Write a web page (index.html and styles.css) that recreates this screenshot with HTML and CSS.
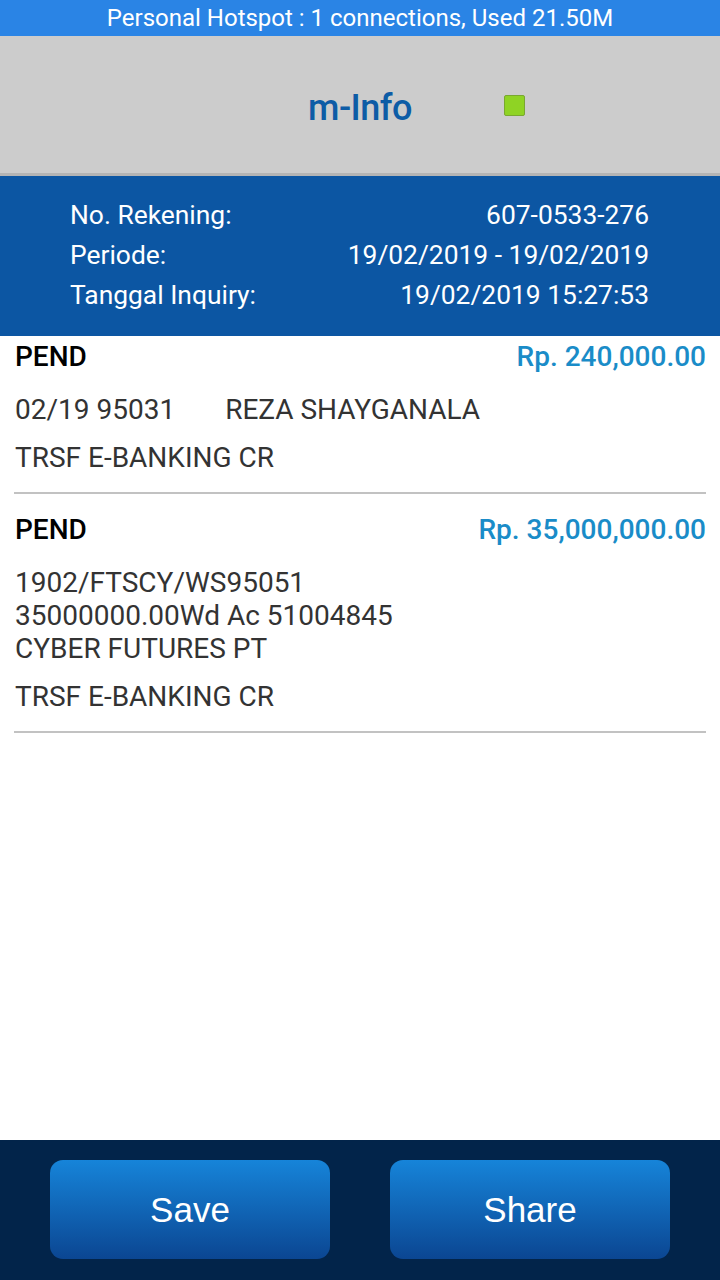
FILE: index.html
```html
<!DOCTYPE html>
<html lang="id">
<head>
<meta charset="utf-8">
<title>m-Info</title>
<link rel="stylesheet" href="styles.css">
</head>
<body>
<div class="screen">
  <div class="statusbar">Personal Hotspot : 1 connections, Used 21.50M</div>
  <header class="appbar">
    <h1 class="title">m-Info</h1>
    <span class="indicator"></span>
  </header>
  <section class="info">
    <div class="info-row"><span>No. Rekening:</span><span>607-0533-276</span></div>
    <div class="info-row"><span>Periode:</span><span>19/02/2019 - 19/02/2019</span></div>
    <div class="info-row"><span>Tanggal Inquiry:</span><span>19/02/2019 15:27:53</span></div>
  </section>
  <main class="list">
    <div class="entry">
      <div class="entry-head"><span class="status">PEND</span><span class="amount">Rp. 240,000.00</span></div>
      <div class="desc"><span class="code">02/19 95031</span><span>REZA SHAYGANALA</span></div>
      <div class="type">TRSF E-BANKING CR</div>
    </div>
    <div class="entry">
      <div class="entry-head"><span class="status">PEND</span><span class="amount">Rp. 35,000,000.00</span></div>
      <div class="desc">1902/FTSCY/WS95051<br>35000000.00Wd Ac 51004845<br>CYBER FUTURES PT</div>
      <div class="type">TRSF E-BANKING CR</div>
    </div>
  </main>
  <footer class="actions">
    <button class="btn">Save</button>
    <button class="btn">Share</button>
  </footer>
</div>
</body>
</html>
```
FILE: styles.css
```css
* { box-sizing: border-box; }
html, body { margin: 0; padding: 0; }
body {
  font-family: Roboto, "Noto Sans", sans-serif;
  background: #ffffff;
}
.screen {
  width: 720px;
  height: 1280px;
  display: flex;
  flex-direction: column;
  overflow: hidden;
}
.statusbar {
  height: 36px;
  background: #2a84e5;
  color: #ffffff;
  font-size: 24px;
  line-height: 36px;
  text-align: center;
  white-space: nowrap;
}
.appbar {
  height: 140px;
  background: #cccccc;
  border-bottom: 3px solid #b4b4b4;
  display: flex;
  align-items: center;
  justify-content: center;
  padding-top: 6px;
  position: relative;
}
.title {
  margin: 0;
  font-size: 36px;
  font-weight: 500;
  color: #0d5ca6;
  letter-spacing: -0.5px;
}
.indicator {
  position: absolute;
  left: 504px;
  top: 59px;
  width: 21px;
  height: 21px;
  background: #8fd324;
  border: 1px solid #79a830;
  border-radius: 2px;
}
.info {
  height: 160px;
  background: #0c56a3;
  color: #ffffff;
  padding: 19px 71px 21px 70px;
  font-size: 26.4px;
}
.info-row {
  display: flex;
  justify-content: space-between;
  line-height: 40px;
}
.list {
  flex: 1;
  padding: 0 14px;
}
.entry {
  border-bottom: 2px solid #c2c2c2;
  padding-bottom: 18px;
}
.entry + .entry { margin-top: 15px; }
.entry-head {
  display: flex;
  justify-content: space-between;
  align-items: center;
  height: 40px;
  padding-left: 1px;
}
.status {
  font-size: 28px;
  font-weight: 500;
  color: #000000;
}
.amount {
  font-size: 28px;
  font-weight: 500;
  color: #1a8cc8;
}
.desc {
  margin-top: 17px;
  font-size: 28px;
  line-height: 33px;
  color: #333333;
  padding-left: 1px;
}
.code { margin-right: 50px; }
.type {
  margin-top: 15px;
  font-size: 28px;
  line-height: 33px;
  color: #333333;
  padding-left: 1px;
}
.actions {
  height: 140px;
  background: #02244a;
  display: flex;
  justify-content: center;
  gap: 60px;
  padding-top: 20px;
}
.btn {
  width: 280px;
  height: 99px;
  border: none;
  border-radius: 13px;
  background: linear-gradient(to bottom, #1684d9, #0b4692);
  color: #ffffff;
  font-family: "Liberation Sans", Arial, sans-serif;
  font-size: 35px;
  line-height: 91px;
  padding: 0;
}
```
